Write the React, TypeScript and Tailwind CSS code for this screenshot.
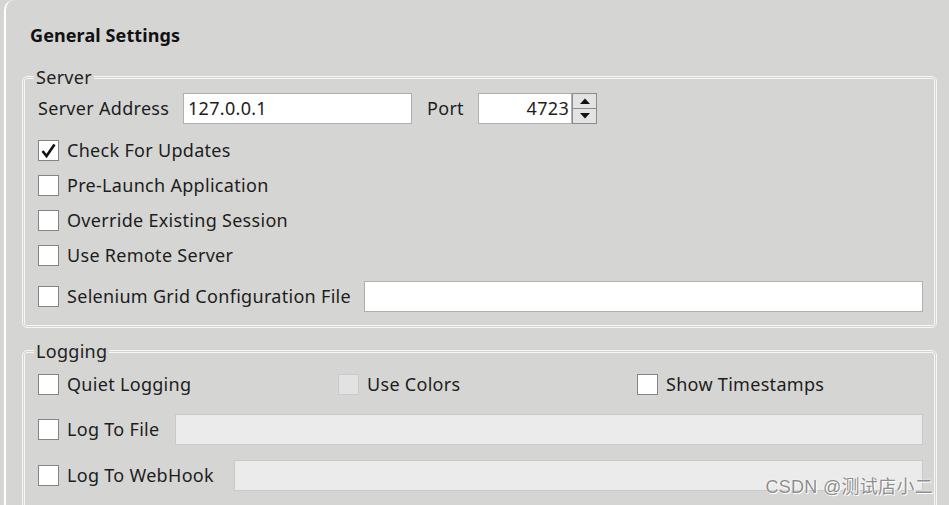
import clsx from 'clsx';
import type { ReactNode } from 'react';

const font = { fontFamily: '"Noto Sans", "Open Sans", sans-serif' };

function CheckBox({ label, checked, disabled }: { label: string; checked?: boolean; disabled?: boolean }) {
  return (
    <div className="flex items-center gap-[8px]">
      <span
        className={clsx(
          'w-[21px] h-[21px] border flex items-center justify-center shrink-0',
          disabled ? 'bg-[#e2e2e2] border-[#cbcbcb]' : 'bg-white border-[#858585]'
        )}
      >
        {checked && (
          <svg width="17" height="17" viewBox="0 0 17 17">
            <path d="M2.5 9 L6.5 14 L14.5 2.5" fill="none" stroke="#111" strokeWidth="2.6" strokeLinejoin="miter" />
          </svg>
        )}
      </span>
      <span className="whitespace-nowrap">{label}</span>
    </div>
  );
}

function Field({ value, disabled, className }: { value?: string; disabled?: boolean; className?: string }) {
  return (
    <div
      className={clsx(
        'h-[31px] border flex items-center px-[4px]',
        disabled ? 'bg-[#ebebeb] border-[#c9c9c9]' : 'bg-white border-[#b0b0b0]',
        className
      )}
    >
      {value}
    </div>
  );
}

function Group({ title, children }: { title: string; children: ReactNode }) {
  return (
    <fieldset className="border-[3px] border-double border-[#f6f6f6] rounded-[5px] min-w-0">
      <legend className="ml-[9px] px-[2px] leading-[24px] text-[#222]">{title}</legend>
      <div className="pl-[13px] pr-[11px]">{children}</div>
    </fieldset>
  );
}

function Spinner() {
  return (
    <div className="flex flex-col w-[25px] h-[31px] border border-[#8c8c8c] bg-[#e3e3e3]">
      <div className="flex-1 flex items-center justify-center border-b border-[#8c8c8c]">
        <svg width="10" height="6" viewBox="0 0 10 6">
          <path d="M0 6 L5 0.5 L10 6 Z" fill="#111" />
        </svg>
      </div>
      <div className="flex-1 flex items-center justify-center">
        <svg width="10" height="6" viewBox="0 0 10 6">
          <path d="M0 0 L5 5.5 L10 0 Z" fill="#111" />
        </svg>
      </div>
    </div>
  );
}

export default function App() {
  return (
    <div
      className="relative w-[949px] h-[505px] overflow-hidden bg-[#d5d5d4] text-[18px] tracking-[0.3px] text-[#1d1d1d]"
      style={font}
    >
      <div className="absolute -left-[6px] -top-[6px] w-[16px] h-[18px] border-l-[3px] border-t-[3px] border-[#3a3a3a] rounded-tl-[12px]" />
      <div className="ml-[4px] h-full border-l-2 border-white rounded-tl-[10px]">
        <div className="pl-[16px] pr-[12px] pt-[23px]">
          <h1 className="pl-[8px] h-[24px] leading-[24px] font-bold tracking-[0.1px] text-[#111]">General Settings</h1>

          <div className="mt-[18px]">
            <Group title="Server">
              <div className="flex items-center h-[31px] mt-[4px]">
                <span className="w-[145px] whitespace-nowrap">Server Address</span>
                <Field value="127.0.0.1" className="w-[229px]" />
                <span className="ml-[15px] w-[51px]">Port</span>
                <Field value="4723" className="w-[94px] justify-end pr-[2px]" />
                <Spinner />
              </div>
              <div className="mt-[9px] flex flex-col">
                <div className="h-[35px] flex items-center">
                  <CheckBox label="Check For Updates" checked />
                </div>
                <div className="h-[35px] flex items-center">
                  <CheckBox label="Pre-Launch Application" />
                </div>
                <div className="h-[35px] flex items-center">
                  <CheckBox label="Override Existing Session" />
                </div>
                <div className="h-[35px] flex items-center">
                  <CheckBox label="Use Remote Server" />
                </div>
              </div>
              <div className="mt-[8px] mb-[13px] flex items-center gap-[13px]">
                <CheckBox label="Selenium Grid Configuration File" />
                <Field className="flex-1" />
              </div>
            </Group>
          </div>

          <div className="mt-[11px]">
            <Group title="Logging">
              <div className="mt-[4px] h-[35px] flex items-center">
                <div className="w-[300px]">
                  <CheckBox label="Quiet Logging" />
                </div>
                <div className="w-[299px]">
                  <CheckBox label="Use Colors" disabled />
                </div>
                <CheckBox label="Show Timestamps" />
              </div>
              <div className="mt-[12px] flex items-center gap-[16px]">
                <CheckBox label="Log To File" />
                <Field disabled className="flex-1" />
              </div>
              <div className="mt-[15px] mb-[20px] flex items-center gap-[20px]">
                <CheckBox label="Log To WebHook" />
                <Field disabled className="flex-1" />
              </div>
            </Group>
          </div>
        </div>
      </div>

      <div
        className="absolute right-[16px] bottom-[8px] text-[18px] leading-[20px] tracking-[0.3px] text-[#8e8e8e] [text-shadow:0_0_2px_#fff,1px_1px_0_#fff]"
        style={{ fontFamily: '"Liberation Sans", "Noto Sans CJK SC", sans-serif' }}
      >
        CSDN @测试店小二
      </div>
    </div>
  );
}
